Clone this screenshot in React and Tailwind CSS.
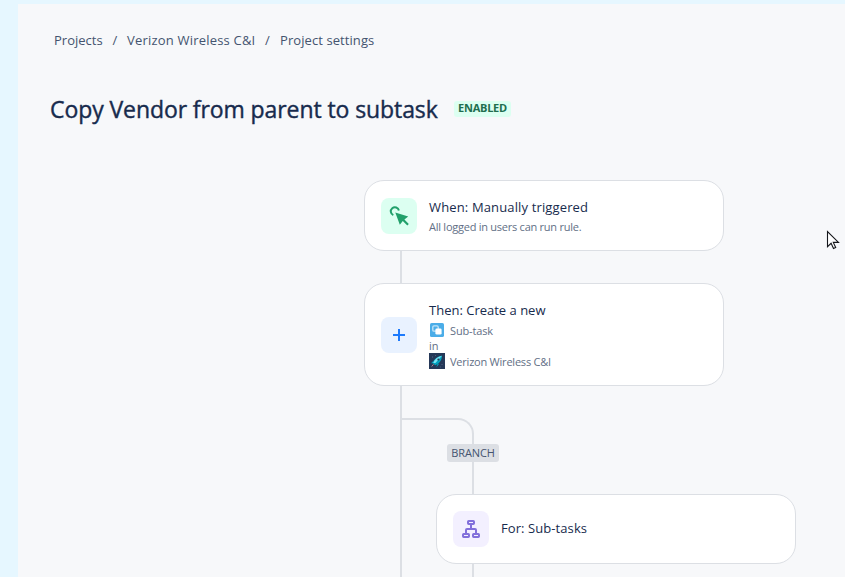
import React from "react";

function ClickIcon() {
  return (
    <svg width="36" height="36" viewBox="0 0 36 36" fill="none">
      <path d="M12.3 17.1a4.1 4.1 0 1 1 5.6-4.6" stroke="#22A06B" strokeWidth="2" />
      <path d="M14.3 14.6 27.2 18.5 23.4 21.4 27.8 25.9 26.3 27.4 21.8 22.9 18.8 26.8Z" fill="#22A06B" />
    </svg>
  );
}

function PlusIcon() {
  return (
    <svg width="36" height="36" viewBox="0 0 36 36" fill="none">
      <path d="M18 12v12M12 18h12" stroke="#1D7AFC" strokeWidth="2" />
    </svg>
  );
}

function TreeIcon() {
  return (
    <svg width="36" height="36" viewBox="0 0 36 36" fill="none" stroke="#8270DB" strokeWidth="2">
      <rect x="15" y="10" width="6" height="3" rx="0.7" />
      <rect x="10" y="23" width="6" height="3" rx="0.7" />
      <rect x="20" y="23" width="6" height="3" rx="0.7" />
      <path d="M18 13v5M13 23v-4a1 1 0 0 1 1-1h8a1 1 0 0 1 1 1v4" />
    </svg>
  );
}

function SubtaskIcon() {
  return (
    <svg width="14" height="14" viewBox="0 0 14 14" className="block">
      <rect width="14" height="14" rx="1.6" fill="#4BADE8" />
      <rect x="2.8" y="2.8" width="5.4" height="5.4" rx="1.2" fill="none" stroke="#C4E5F8" strokeWidth="1.3" />
      <rect x="5.4" y="5.4" width="6.2" height="6.2" rx="1.4" fill="#fff" />
    </svg>
  );
}

function RocketIcon() {
  return (
    <svg width="16" height="16" viewBox="0 0 16 16" className="block">
      <rect width="16" height="16" fill="#253858" />
      <path d="M4.8 7.4 2 10.2l2.8.1ZM8.3 11.2 7.4 14.2l3-3.6Z" fill="#00A3BF" />
      <path d="M4 10.2C5 6.2 8.5 3 13 2.8 13 7 10.2 10.8 6.2 12.2Z" fill="#00A3BF" />
      <path d="M4.2 10C5.6 6.2 8.5 3.5 13 2.8L6.4 10Z" fill="#79E2F2" />
      <circle cx="9.4" cy="6.5" r="1.1" fill="#253858" />
      <path d="M4.5 11.3 2.7 13.5" stroke="#B3838A" strokeWidth="1" />
      <path d="M3 4h1M12.5 11.5h1M6 2.5h.8M11 14h.7" stroke="#5E7594" strokeWidth=".8" />
    </svg>
  );
}

function Card({ icon, tint, height, children }) {
  return (
    <div className={`flex w-[360px] shrink-0 items-center gap-3 rounded-[20px] border border-[#DCDFE4] bg-white pl-4 ${height}`}>
      <div className={`size-9 shrink-0 rounded-lg ${tint}`}>{icon}</div>
      <div className="flex flex-col items-start whitespace-nowrap">{children}</div>
    </div>
  );
}

export default function App() {
  return (
    <div className="h-[577px] w-[845px] overflow-hidden bg-[#E6F7FF] pl-[18px] pt-1 font-['Open_Sans','Noto_Sans',sans-serif] text-[#172B4D]">
      <main className="h-[573px] bg-[#F7F8FA]">
        <nav className="flex h-[74px] items-center whitespace-nowrap pl-9 text-[13px] text-[#44546F]">
          <span className="w-[49px]">Projects</span>
          <span className="w-6 text-center">/</span>
          <span className="w-[128px] tracking-[0.2px]">Verizon Wireless C&amp;I</span>
          <span className="w-[25px] text-center">/</span>
          <span className="tracking-[0.08px]">Project settings</span>
        </nav>
        <header className="flex h-[62px] items-center whitespace-nowrap pl-8">
          <h1 className="w-[404px] text-[23px] font-medium tracking-[-0.09px] [-webkit-text-stroke:0.4px_#172B4D]">Copy Vendor from parent to subtask</h1>
          <span className="mb-px flex h-4 w-[57px] items-center justify-center rounded-[3px] bg-[#DCFFF1] text-[11px] font-bold tracking-[-0.25px] text-[#216E4E]">ENABLED</span>
        </header>
        <section className="flex flex-col pl-[346px] pt-10">
          <Card icon={<ClickIcon />} tint="bg-[#DCFFF1]" height="h-[71px]">
            <div className="pt-0.5 text-[13px] leading-5 tracking-[0.14px]">When: Manually triggered</div>
            <div className="text-[11px] leading-5 tracking-[-0.25px] text-[#626F86]">All logged in users can run rule.</div>
          </Card>
          <div className="ml-9 h-8 w-0.5 bg-[#DCDFE4]" />
          <Card icon={<PlusIcon />} tint="bg-[#E9F2FF]" height="h-[103px]">
            <div className="pt-px text-[13px] leading-5">Then: Create a new</div>
            <div className="flex h-[21px] items-center pt-px text-[11px] tracking-[-0.15px] text-[#626F86]">
              <span className="w-[21px] pb-0.5 pl-px"><SubtaskIcon /></span>
              <span className="pt-0.5">Sub-task</span>
            </div>
            <div className="text-[11px] leading-[10px] text-[#626F86]">in</div>
            <div className="flex h-5 items-center text-[11px] tracking-[-0.22px] text-[#626F86]">
              <span className="w-[21px]"><RocketIcon /></span>
              <span className="pt-[3px]">Verizon Wireless C&amp;I</span>
            </div>
          </Card>
          <div className="ml-9 h-[191px] border-l-2 border-[#DCDFE4] pl-[34px] pt-8">
            <div className="-ml-[34px] h-[26px] w-[72px] rounded-tr-2xl border-r-2 border-t-2 border-[#DCDFE4]" />
            <div className="ml-[11px] flex h-[18px] w-[52px] items-center justify-center rounded-[3px] bg-[#DCDFE4] text-[11px] tracking-[-0.15px] text-[#44546F]">BRANCH</div>
            <div className="ml-9 h-8 w-0.5 bg-[#DCDFE4]" />
            <Card icon={<TreeIcon />} tint="bg-[#F3F0FF]" height="h-[70px]">
              <div className="pb-0.5 text-[13px] leading-5 tracking-[0.08px]">For: Sub-tasks</div>
            </Card>
            <div className="ml-9 h-[13px] w-0.5 bg-[#DCDFE4]" />
          </div>
        </section>
      </main>
      <svg className="absolute left-[826px] top-[230px]" width="14" height="20" viewBox="0 0 14 20">
        <path d="M1.5 1.5v15.2l3.6-3.4 2.4 5.2 2.2-1-2.4-5.1h5.2Z" fill="#fff" stroke="#15171C" strokeWidth="1.1" />
      </svg>
    </div>
  );
}
